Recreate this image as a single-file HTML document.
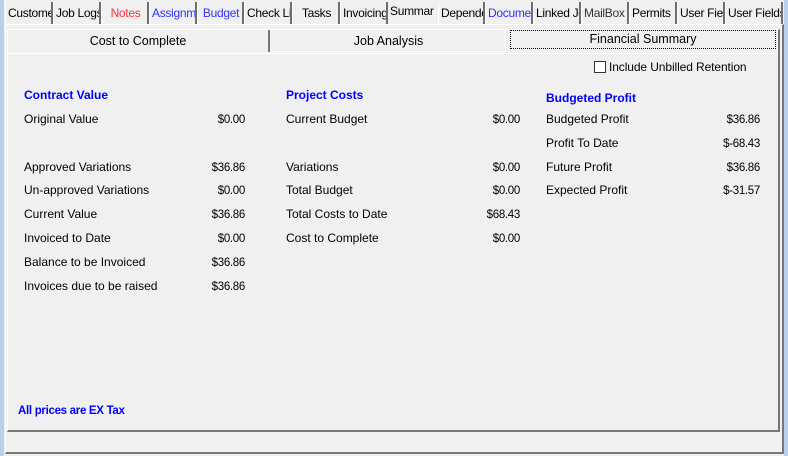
<!DOCTYPE html>
<html><head><style>
*{margin:0;padding:0;box-sizing:border-box}
body{width:788px;height:456px;background:#f0f0f0;position:relative;overflow:hidden;font-family:"Liberation Sans",sans-serif;font-size:12px;color:#000}
.a{position:absolute;white-space:nowrap;line-height:14px}
.tab{position:absolute;top:2px;height:22px;border-left:1px solid #fff;border-right:2px solid #6e6e6e;line-height:22px;overflow:hidden;white-space:nowrap;font-size:12px;letter-spacing:-0.3px;padding-left:2px;background:#f0f0f0}
.h{color:#0000ff;font-weight:bold;font-size:12px}
.v{text-align:right;font-size:11.5px;letter-spacing:-0.3px}
</style></head><body>
<div style="position:absolute;left:0;top:0;width:4px;height:456px;background:#b8d0ea"></div>
<div style="position:absolute;right:0;top:0;width:4px;height:456px;background:#b8d0ea"></div>
<div style="position:absolute;left:5px;top:24px;width:779px;height:430px;border-left:1px solid #fff;border-top:1px solid #fff;border-right:2px solid #777;border-bottom:2px solid #777"></div>
<div class="tab" style="left:5px;width:48px">Custome</div>
<div class="tab" style="left:53px;width:48px">Job Logs</div>
<div class="tab" style="left:101px;width:48px;color:#ff3040;text-align:center">Notes</div>
<div class="tab" style="left:149px;width:48px;color:#3030ff">Assignm</div>
<div class="tab" style="left:197px;width:47px;color:#3030ff;text-align:center">Budget</div>
<div class="tab" style="left:244px;width:48px">Check Lis</div>
<div class="tab" style="left:292px;width:48px;text-align:center">Tasks</div>
<div class="tab" style="left:340px;width:48px">Invoicing</div>
<div class="tab" style="left:388px;top:0;width:50px;height:24px;border:none;line-height:22px">Summar</div>
<div class="tab" style="left:438px;width:47px">Depende</div>
<div class="tab" style="left:485px;width:48px;color:#3030ff">Docume</div>
<div class="tab" style="left:533px;width:48px">Linked Jo</div>
<div class="tab" style="left:581px;width:48px;color:#333">MailBox</div>
<div class="tab" style="left:629px;width:48px">Permits</div>
<div class="tab" style="left:677px;width:48px">User Fie</div>
<div class="tab" style="left:725px;width:58px">User Fields</div>
<div style="position:absolute;left:7px;top:29px;width:773px;height:403px;border-left:1px solid #fff;border-top:1px solid #fff;border-right:2px solid #777;border-bottom:2px solid #777"></div>
<div class="a" style="left:8px;top:30px;width:262px;height:22px;line-height:22px;text-align:center;border-right:2px solid #777;font-size:12.5px">Cost to Complete</div>
<div class="a" style="left:272px;top:30px;width:234px;height:22px;line-height:22px;text-align:center;border-right:1px solid #fff;border-bottom:1px solid #fff;font-size:12.5px">Job Analysis</div>
<div class="a" style="left:510px;top:30px;width:266px;height:19px;line-height:17px;text-align:center;border:1px dotted #000;font-size:12.5px">Financial Summary</div>
<div style="position:absolute;left:8px;top:53px;width:770px;height:1px;background:#fff"></div>
<div style="position:absolute;left:594px;top:61px;width:12px;height:12px;border:1px solid #333;background:#fff"></div>
<div class="a" style="left:609px;top:60px;font-size:12px;letter-spacing:-0.1px">Include Unbilled Retention</div>

<div class="a h" style="left:24px;top:88px">Contract Value</div>
<div class="a" style="left:24px;top:112px">Original Value</div>
<div class="a" style="left:24px;top:160px">Approved Variations</div>
<div class="a" style="left:24px;top:183px">Un-approved Variations</div>
<div class="a" style="left:24px;top:207px">Current Value</div>
<div class="a" style="left:24px;top:231px">Invoiced to Date</div>
<div class="a" style="left:24px;top:255px">Balance to be Invoiced</div>
<div class="a" style="left:24px;top:279px">Invoices due to be raised</div>
<div class="a v" style="left:185px;width:60px;top:113px">$0.00</div>
<div class="a v" style="left:185px;width:60px;top:161px">$36.86</div>
<div class="a v" style="left:185px;width:60px;top:184px">$0.00</div>
<div class="a v" style="left:185px;width:60px;top:208px">$36.86</div>
<div class="a v" style="left:185px;width:60px;top:232px">$0.00</div>
<div class="a v" style="left:185px;width:60px;top:256px">$36.86</div>
<div class="a v" style="left:185px;width:60px;top:280px">$36.86</div>

<div class="a h" style="left:286px;top:88px">Project Costs</div>
<div class="a" style="left:286px;top:112px">Current Budget</div>
<div class="a" style="left:286px;top:160px">Variations</div>
<div class="a" style="left:286px;top:183px">Total Budget</div>
<div class="a" style="left:286px;top:207px">Total Costs to Date</div>
<div class="a" style="left:286px;top:231px">Cost to Complete</div>
<div class="a v" style="left:460px;width:60px;top:113px">$0.00</div>
<div class="a v" style="left:460px;width:60px;top:161px">$0.00</div>
<div class="a v" style="left:460px;width:60px;top:184px">$0.00</div>
<div class="a v" style="left:460px;width:60px;top:208px">$68.43</div>
<div class="a v" style="left:460px;width:60px;top:232px">$0.00</div>

<div class="a h" style="left:546px;top:91px">Budgeted Profit</div>
<div class="a" style="left:546px;top:112px">Budgeted Profit</div>
<div class="a" style="left:546px;top:136px">Profit To Date</div>
<div class="a" style="left:546px;top:160px">Future Profit</div>
<div class="a" style="left:546px;top:183px">Expected Profit</div>
<div class="a v" style="left:700px;width:60px;top:113px">$36.86</div>
<div class="a v" style="left:700px;width:60px;top:137px">$-68.43</div>
<div class="a v" style="left:700px;width:60px;top:161px">$36.86</div>
<div class="a v" style="left:700px;width:60px;top:184px">$-31.57</div>

<div class="a h" style="left:18px;top:404px;font-size:11.5px;letter-spacing:-0.3px">All prices are EX Tax</div>
</body></html>
